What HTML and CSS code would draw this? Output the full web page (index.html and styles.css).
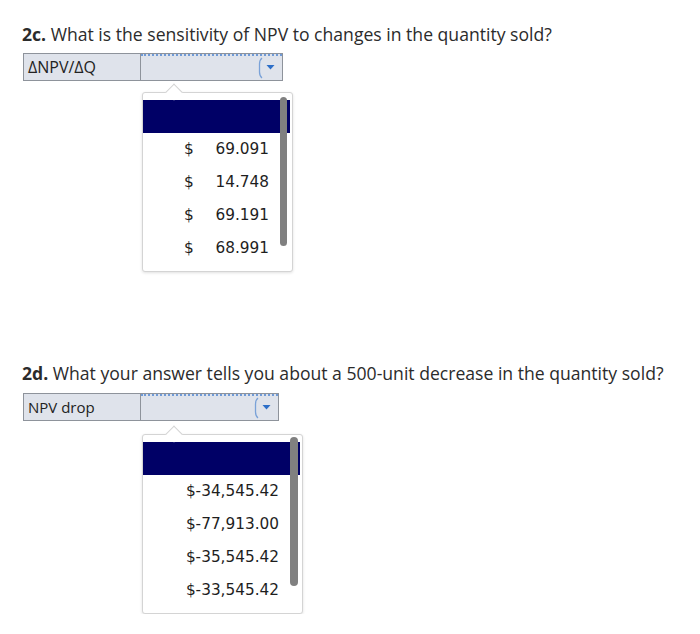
FILE: index.html
```html
<!DOCTYPE html>
<html>
<head>
<meta charset="utf-8">
<link rel="stylesheet" href="styles.css">
</head>
<body>
<div class="page">
  <section class="question q1">
    <h2 class="title"><b>2c.</b> What is the sensitivity of NPV to changes in the quantity sold?</h2>
    <div class="row row-a">
      <div class="label">ΔNPV/ΔQ</div>
      <div class="select">
        <svg class="arrow" width="24" height="24" viewBox="0 0 24 24">
          <path d="M5 2 Q2.5 4 2.5 8 L2.5 16 Q2.5 20 5 22" fill="none" stroke="#7aa2d8" stroke-width="1.3"/>
          <path d="M9.5 9 L17.5 9 L13.5 13.5 Z" fill="#2d6fc8"/>
        </svg>
      </div>
    </div>
    <div class="popup pop-a">
      <span class="notch"></span>
      <div class="scroll"></div>
      <ul class="list">
        <li class="item head"></li>
        <li class="item split"><span>$</span><span>69.091</span></li>
        <li class="item split"><span>$</span><span>14.748</span></li>
        <li class="item split"><span>$</span><span>69.191</span></li>
        <li class="item split"><span>$</span><span>68.991</span></li>
      </ul>
    </div>
  </section>

  <section class="question q2">
    <h2 class="title"><b>2d.</b> What your answer tells you about a 500-unit decrease in the quantity sold?</h2>
    <div class="row row-b">
      <div class="label">NPV drop</div>
      <div class="select">
        <svg class="arrow" width="24" height="24" viewBox="0 0 24 24">
          <path d="M5 2 Q2.5 4 2.5 8 L2.5 16 Q2.5 20 5 22" fill="none" stroke="#7aa2d8" stroke-width="1.3"/>
          <path d="M9.5 9 L17.5 9 L13.5 13.5 Z" fill="#2d6fc8"/>
        </svg>
      </div>
    </div>
    <div class="popup pop-b">
      <span class="notch"></span>
      <div class="scroll"></div>
      <ul class="list">
        <li class="item head"></li>
        <li class="item right">$-34,545.42</li>
        <li class="item right">$-77,913.00</li>
        <li class="item right">$-35,545.42</li>
        <li class="item right">$-33,545.42</li>
      </ul>
    </div>
  </section>
</div>
</body>
</html>
```
FILE: styles.css
```css
* { box-sizing: border-box; }
html, body { margin: 0; padding: 0; background: #fff; }
.page {
  padding: 22px 0 0 22px;
  font-family: "Open Sans", "Liberation Sans", sans-serif;
  color: #2b2b2b;
}
.question { display: flex; flex-direction: column; align-items: flex-start; }
.q2 { margin-top: 89px; }
.title {
  margin: 0;
  font-size: 17.6px;
  font-weight: 400;
  line-height: 24px;
  letter-spacing: 0;
  white-space: nowrap;
}
.title b { font-weight: 700; }
.row {
  display: flex;
  margin-top: 7px;
  margin-left: 1px;
  height: 28px;
  border: 1px solid #8e939b;
  background: #dfe3eb;
}
.row-b { margin-top: 8px; }
.label {
  width: 117px;
  padding-left: 4px;
  font-size: 15px;
  line-height: 26px;
  border-right: 1px solid #8e939b;
  color: #222;
}
.row-a .label { font-size: 16px; }
.row-a .select { width: 141px; }
.row-b .select { width: 137px; }
.select {
  position: relative;
  border-top: 2px dotted #6f9ad6;
}
.arrow { position: absolute; right: 1px; top: 0; }
.popup {
  position: relative;
  margin-top: 11px;
  margin-left: 120px;
  background: #fff;
  border: 1px solid #d4d4d4;
  border-radius: 3px;
  box-shadow: 0 1px 3px rgba(0,0,0,0.12);
  padding: 7px 2px 6px 0;
}
.pop-a { width: 151px; }
.pop-b { width: 161px; margin-top: 13px; }
.notch {
  position: absolute;
  top: -7px;
  left: 25px;
  width: 12px;
  height: 12px;
  background: #fff;
  border-left: 1px solid #d4d4d4;
  border-top: 1px solid #d4d4d4;
  transform: rotate(45deg);
}
.scroll {
  position: absolute;
  top: 4px;
  right: 5px;
  width: 7px;
  height: 149px;
  border-radius: 4px;
  background: #808080;
  z-index: 2;
}
.pop-b .scroll { top: 2px; right: 4px; width: 8px; }
.list {
  list-style: none;
  margin: 0;
  padding: 0;
  font-family: "DejaVu Sans", Verdana, sans-serif;
  font-size: 15.3px;
  color: #1e1e1e;
}
.item {
  height: 33px;
  line-height: 33px;
  padding: 0 21px 0 41px;
}
.item.head { background: #000066; }
.item.split { display: flex; justify-content: space-between; }
.item.right { text-align: right; }
```
